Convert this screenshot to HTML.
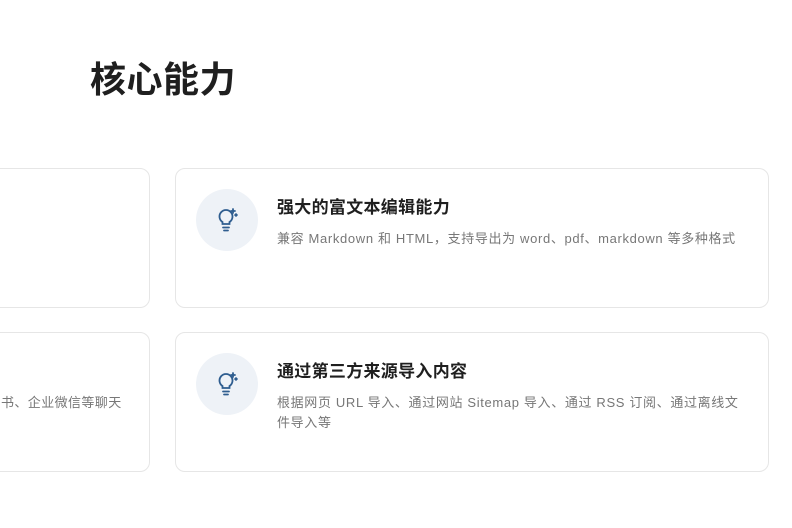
<!DOCTYPE html>
<html><head><meta charset="utf-8"><style>
body{margin:0;width:792px;height:528px;background:#fff;overflow:hidden;position:relative;font-family:"Liberation Sans","Noto Sans CJK SC",sans-serif}
h1{position:absolute;left:90px;top:57px;margin:0;font-size:36px;font-weight:700;color:#1f1f1f;line-height:46px;letter-spacing:0.5px}
.card{position:absolute;border:1px solid #e6e6e6;border-radius:10px;background:#fff;box-sizing:border-box}
.ic{position:absolute;left:20px;top:20px;width:62px;height:62px;border-radius:50%;background:#eef2f7}
.t{position:absolute;left:101px;top:24px;font-size:17px;font-weight:700;color:#1f1f1f;letter-spacing:0.3px}
.d{position:absolute;left:101px;top:60px;right:18px;font-size:13px;line-height:20px;color:#777;letter-spacing:0.65px}
</style></head><body>
<h1>核心能力</h1>
<div class="card" style="left:-20px;top:168px;width:170px;height:140px"></div>
<div class="card" style="left:-20px;top:332px;width:170px;height:140px"><div class="d" style="left:20px;top:60px;right:auto;white-space:nowrap;letter-spacing:0.4px">书、企业微信等聊天</div></div>
<div class="card" style="left:175px;top:168px;width:594px;height:140px">
<div class="ic"><svg width="62" height="62" viewBox="0 0 62 62" fill="none" stroke="#2e5d8f" stroke-width="1.8" stroke-linecap="round"><path d="M26.5 33a6.5 6.5 0 1 1 7 0v2h-7z"/><path d="M27 38.5h6M28 41.5h4"/><path d="M37 20v4M35 22h4M40 25v2M39 26h2"/></svg></div>
<div class="t">强大的富文本编辑能力</div>
<div class="d">兼容 Markdown 和 HTML，支持导出为 word、pdf、markdown 等多种格式</div></div>
<div class="card" style="left:175px;top:332px;width:594px;height:140px">
<div class="ic"><svg width="62" height="62" viewBox="0 0 62 62" fill="none" stroke="#2e5d8f" stroke-width="1.8" stroke-linecap="round"><path d="M26.5 33a6.5 6.5 0 1 1 7 0v2h-7z"/><path d="M27 38.5h6M28 41.5h4"/><path d="M37 20v4M35 22h4M40 25v2M39 26h2"/></svg></div>
<div class="t">通过第三方来源导入内容</div>
<div class="d" style="right:22px">根据网页 URL 导入、通过网站 Sitemap 导入、通过 RSS 订阅、通过离线文件导入等</div></div>
</body></html>
